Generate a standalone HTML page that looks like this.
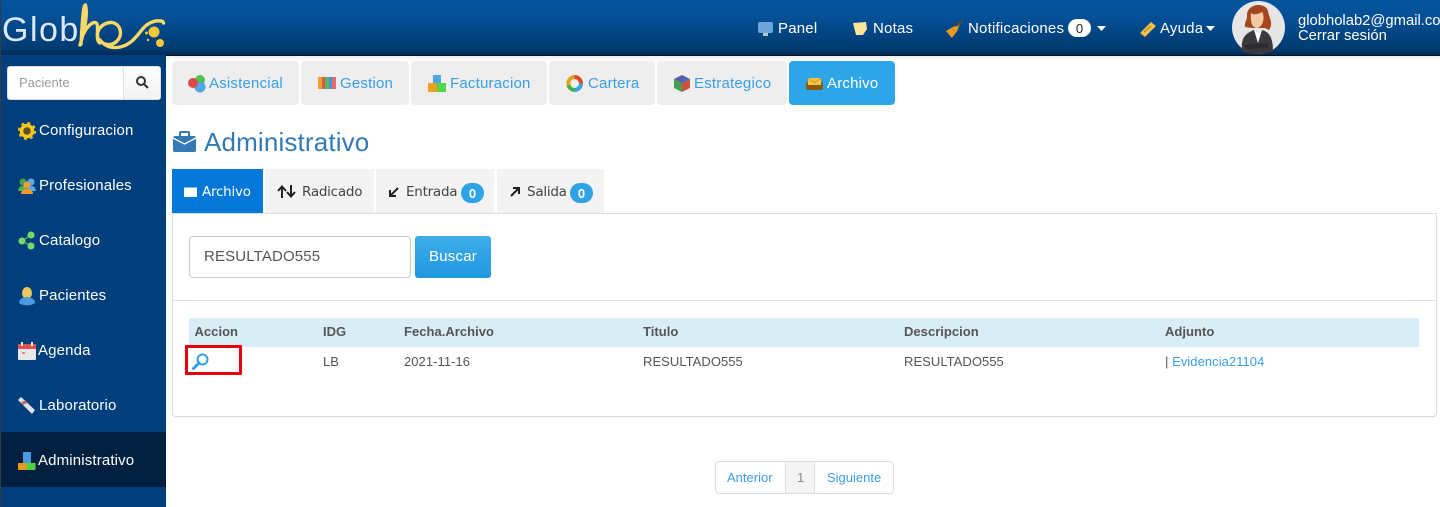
<!DOCTYPE html>
<html><head><meta charset="utf-8"><style>
html,body{margin:0;padding:0;width:1440px;height:507px;overflow:hidden;background:#fff}
body{font-family:"Liberation Sans",sans-serif;position:relative}
.a{position:absolute;white-space:nowrap}
svg{position:absolute;overflow:visible}
.nav{color:#fff;font-size:15px;line-height:18px;top:20px;letter-spacing:.2px}
.side{color:#fff;font-size:15px;line-height:18px;left:39px;letter-spacing:.15px}
.tab{position:absolute;top:61px;height:44px;background:#eee;border-radius:4px}
.tt{color:#3a9ee8;font-size:15px;line-height:18px;top:75px;letter-spacing:.2px}
.sub{position:absolute;top:169px;height:44px;background:#f3f3f3}
.st{font-family:"DejaVu Sans",sans-serif;font-size:13.5px;line-height:18px;top:183px;color:#444;letter-spacing:-.25px}
.badge{position:absolute;top:183px;width:23px;height:20px;border-radius:11px;background:#2ea3e8;color:#fff;font-size:13px;font-weight:bold;line-height:21px;text-align:center}
.th{font-size:13px;font-weight:bold;color:#555;top:323px;line-height:17px;letter-spacing:.03px}
.td{font-size:13px;color:#555;top:353px;line-height:17px;letter-spacing:.05px}
</style></head><body>
<div class="a" style="left:0;top:0;width:1440px;height:55px;background:linear-gradient(#04549e,#045097 30%,#003a70 90%,#002a55);border-bottom:1px solid #012"></div>
<div class="a" style="left:0;top:56px;width:1440px;height:5px;background:linear-gradient(#eee,#fff)"></div>
<div class="a" style="left:0;top:55px;width:166px;height:452px;background:#003f7c"></div>
<div class="a" style="left:0;top:0;width:1px;height:507px;background:#333c44"></div>
<div class="a" style="left:1px;top:432px;width:165px;height:55px;background:#01203f"></div>

<div class="a" style="left:2px;top:10px;font-size:34px;line-height:40px;color:#dbe8f5;letter-spacing:1.5px;font-weight:normal">Glob</div>
<svg style="left:0;top:0" width="170" height="56" viewBox="0 0 170 56" fill="none">
<path d="M80 45C84 32 88 15 85.500 5C83 4 82 28 81 44M82 37C86 27 94 19 97 24C99 30 95 40 100 43" stroke="#f8d866" stroke-width="3.400" stroke-linecap="round"/>
<path d="M100 42C93 32 102 22 112 22.500C121 24 123 35 117 41C112 46 104 46 100 40M104 44C112 50 124 48 132 41C140 34 143 26 150 23C156 20 163 20 163.500 23" stroke="#f8d866" stroke-width="3.400" stroke-linecap="round"/>
<circle cx="154" cy="32" r="5.500" fill="#f4c83c"/><circle cx="160" cy="43" r="4" fill="#f4c83c"/><circle cx="146.500" cy="33" r="1.500" fill="#f4c83c"/><circle cx="148" cy="40" r="1.200" fill="#f4c83c"/>
</svg>

<!-- top nav -->
<svg style="left:758px;top:22px" width="16" height="15"><rect x="0" y="0" width="15" height="11" rx="2" fill="#6aa6dc"/><rect x="5" y="11" width="5" height="3" fill="#b8c4d0"/></svg>
<div class="a nav" style="left:778px">Panel</div>
<svg style="left:852px;top:21px" width="16" height="16"><path d="M1 2L14 1L15 8L11 14L4 14Z" fill="#fbe59a"/></svg>
<div class="a nav" style="left:873px">Notas</div>
<svg style="left:945px;top:21px" width="18" height="18"><path d="M16 0L12 5C8 5 5 8 1 10L7 17C9 13 12 12 13 8Z" fill="#e89a20"/><path d="M16 0L12 5" stroke="#7a4a10" stroke-width="2"/></svg>
<div class="a nav" style="left:968px">Notificaciones</div>
<div class="a" style="left:1068px;top:19px;width:23px;height:18px;border-radius:10px;background:#fff;color:#222;font-size:13px;line-height:19px;text-align:center">0</div>
<svg style="left:1097px;top:26px" width="9" height="5"><path d="M0 0H9L4.500 5Z" fill="#fff"/></svg>
<svg style="left:1139px;top:21px" width="18" height="18"><path d="M1 12L12 1L17 5L6 16Z" fill="#eec24a"/><path d="M5 11L12 5" stroke="#a87c18"/></svg>
<div class="a nav" style="left:1160px">Ayuda</div>
<svg style="left:1206px;top:26px" width="9" height="5"><path d="M0 0H9L4.500 5Z" fill="#fff"/></svg>
<svg style="left:1232px;top:1px" width="53" height="53" viewBox="0 0 53 53">
<circle cx="26.500" cy="26.500" r="26.500" fill="#e6e6e6"/>
<path d="M15 15C14 3 33 0 36 10C37 17 42 22 37 29L33 27H20L13 26C12 22 15 20 15 15Z" fill="#a6461e"/>
<path d="M19 12C23 15 28 12 30 11C33 14 32 26 25 27C20 27 18 20 19 12Z" fill="#f4c9a4"/>
<path d="M10 50C9 38 12 33 22 29L26 35L30 29C38 31 41 38 41 50C33 54 18 54 10 50Z" fill="#3a3a3e"/>
<path d="M22 29L26 42L30 29L26 32Z" fill="#fff"/>
<path d="M12 44L36 42L36 47L14 48Z" fill="#2c2c30"/>
</svg>
<div class="a" style="left:1298px;top:14px;color:#fff;font-size:14.800px;line-height:14.500px">globholab2@gmail.com<br>Cerrar sesión</div>

<!-- search -->
<div class="a" style="left:7px;top:66px;height:32px;background:#fff;border-radius:3px;border:1px solid #ddd;box-sizing:content-box;width:152px"></div>
<div class="a" style="left:123px;top:67px;width:1px;height:32px;background:#ddd"></div>
<div class="a" style="left:124px;top:67px;width:36px;height:32px;background:linear-gradient(#fff,#f2f2f2);border-radius:0 3px 3px 0"></div>
<div class="a" style="left:19px;top:74px;color:#999;font-size:13px;line-height:17px">Paciente</div>
<svg style="left:136px;top:76px" width="13" height="13" fill="none" stroke="#333" stroke-width="2"><circle cx="5" cy="5" r="4"/><path d="M8 8L12 12"/></svg>

<!-- sidebar -->
<svg style="left:18px;top:122px" width="18" height="18" viewBox="0 0 18 18"><circle cx="9" cy="9" r="5.500" fill="#5a5020" stroke="#f4c820" stroke-width="3.500"/><circle cx="9" cy="9" r="8" fill="none" stroke="#ecbc18" stroke-width="2.200" stroke-dasharray="3 3.300"/></svg>
<div class="a side" style="top:122px">Configuracion</div>
<svg style="left:18px;top:178px" width="18" height="16"><circle cx="5" cy="4" r="3.500" fill="#4aa050"/><circle cx="13" cy="4" r="3.500" fill="#5aa8e8"/><path d="M0 13C1 6 8 6 9 13Z" fill="#4ab050"/><path d="M9 13C10 6 17 6 18 13Z" fill="#5aa8e8"/><circle cx="9" cy="7" r="3.500" fill="#eda040"/><path d="M3 16C3 9 15 9 15 16Z" fill="#ed9a30"/></svg>
<div class="a side" style="top:177px">Profesionales</div>
<svg style="left:19px;top:232px" width="16" height="18"><circle cx="3" cy="9" r="3.500" fill="#78dc66"/><circle cx="12" cy="3" r="3.500" fill="#78dc66"/><circle cx="12" cy="14" r="3.500" fill="#78dc66"/><path d="M3 9L12 3M3 9L12 14" stroke="#6ed060"/></svg>
<div class="a side" style="top:232px">Catalogo</div>
<svg style="left:19px;top:287px" width="16" height="18"><ellipse cx="8" cy="6" rx="5" ry="6" fill="#eac860"/><path d="M0 16C0 8 16 8 16 16C12 19 4 19 0 16Z" fill="#4a9ae0"/></svg>
<div class="a side" style="top:287px">Pacientes</div>
<svg style="left:18px;top:342px" width="18" height="18"><rect x="0" y="2" width="18" height="16" rx="1" fill="#e8e8e8"/><path d="M0 3Q0 2 1 2H17Q18 2 18 3V7H0Z" fill="#e05050"/><rect x="3" y="0" width="2" height="4" fill="#eee"/><rect x="13" y="0" width="2" height="4" fill="#eee"/><rect x="4" y="10" width="3" height="2" fill="#d88"/></svg>
<div class="a side" style="top:342px;left:38px">Agenda</div>
<svg style="left:18px;top:397px" width="18" height="17"><path d="M0 3L3 0L17 13L14 17Z" fill="#dfe4ea"/><path d="M3 5L8 3.500L9 6L5 8Z" fill="#d06050"/></svg>
<div class="a side" style="top:397px">Laboratorio</div>
<svg style="left:18px;top:452px" width="18" height="18"><rect x="5" y="0" width="8" height="11" fill="#4a9ae0"/><rect x="0" y="11" width="8.500" height="7" fill="#e89a20"/><rect x="8.500" y="11" width="9" height="7" fill="#50d040"/></svg>
<div class="a side" style="top:452px;left:38px">Administrativo</div>

<!-- top tabs -->
<div class="tab" style="left:172px;width:127px"></div>
<div class="tab" style="left:301px;width:108px"></div>
<div class="tab" style="left:411px;width:136px"></div>
<div class="tab" style="left:549px;width:106px"></div>
<div class="tab" style="left:657px;width:130px"></div>
<div class="tab" style="left:789px;width:106px;background:#2ea5e9"></div>
<svg style="left:188px;top:75px" width="18" height="18"><circle cx="12" cy="5" r="5" fill="#50c050"/><circle cx="12" cy="12" r="5.500" fill="#50a8e8"/><circle cx="5" cy="8" r="5" fill="#e04848"/></svg>
<div class="a tt" style="left:209px">Asistencial</div>
<svg style="left:318px;top:77px" width="18" height="14"><rect x="0" y="0" width="4" height="12" fill="#f0a030"/><rect x="4" y="0" width="3" height="12" fill="#e05a40"/><rect x="7" y="0" width="4" height="12" fill="#58b868"/><rect x="11" y="0" width="3" height="12" fill="#4a90d8"/><rect x="14" y="0" width="4" height="12" fill="#e06a70"/></svg>
<div class="a tt" style="left:340px">Gestion</div>
<svg style="left:428px;top:75px" width="18" height="18"><rect x="5" y="0" width="8" height="9" fill="#4aa8e8"/><rect x="0" y="8" width="9" height="9" fill="#f0a020"/><rect x="9" y="8" width="9" height="9" fill="#50d848"/></svg>
<div class="a tt" style="left:450px">Facturacion</div>
<svg style="left:566px;top:75px" width="17" height="17" fill="none" stroke-width="4"><path d="M2.500 10A6.500 6.500 0 0 1 8.500 2" stroke="#e8a020"/><path d="M8.500 2A6.500 6.500 0 0 1 15 8.500" stroke="#e04828"/><path d="M15 8.500A6.500 6.500 0 0 1 8.500 15" stroke="#3aa0e0"/><path d="M8.500 15A6.500 6.500 0 0 1 2.500 10" stroke="#48b048"/></svg>
<div class="a tt" style="left:588px">Cartera</div>
<svg style="left:674px;top:75px" width="16" height="17"><path d="M8 0L16 4L8 8L0 4Z" fill="#5a5aa8"/><path d="M0 4L8 8V17L0 13Z" fill="#40a050"/><path d="M16 4L8 8V17L16 13Z" fill="#d05040"/><path d="M16 4L8 8L8 3Z" fill="#4070c0"/></svg>
<div class="a tt" style="left:694px">Estrategico</div>
<svg style="left:806px;top:77px" width="17" height="13"><rect x="0" y="5" width="17" height="8" rx="2" fill="#8a5a10"/><path d="M2 1H15V8H2Z" fill="#f4c648"/><path d="M2 1L8.500 6L15 1" stroke="#d09a20" fill="none"/></svg>
<div class="a tt" style="left:827px;color:#fff">Archivo</div>

<!-- title -->
<svg style="left:173px;top:131px" width="23" height="21"><rect x="7" y="1" width="9" height="5" rx="1" fill="none" stroke="#337ab7" stroke-width="2"/><rect x="0" y="5" width="23" height="16" rx="2" fill="#337ab7"/><path d="M0 7L11.500 13L23 7" stroke="#fff" stroke-width="1.300" fill="none"/></svg>
<div class="a" style="left:204px;top:126px;color:#337ab7;font-size:26px;line-height:32px;letter-spacing:.15px">Administrativo</div>

<!-- sub tabs -->
<div class="sub" style="left:172px;width:91px;background:#0378d8"></div>
<div class="sub" style="left:265px;width:109px"></div>
<div class="sub" style="left:376px;width:118px"></div>
<div class="sub" style="left:497px;width:107px"></div>
<svg style="left:184px;top:187px" width="13" height="10"><path d="M0 0.500H13V10H0Z" fill="#fff"/></svg>
<div class="a st" style="left:202px;color:#fff">Archivo</div>
<svg style="left:277px;top:185px" width="19" height="13" fill="none" stroke="#222" stroke-width="2"><path d="M5 13V2M1 6L5 1.500L9 6M14 0V11M10 7L14 11.500L18 7"/></svg>
<div class="a st" style="left:302px">Radicado</div>
<svg style="left:389px;top:187px" width="10" height="10" fill="none" stroke="#222" stroke-width="2"><path d="M9 1L2 8M1 3V9H7"/></svg>
<div class="a st" style="left:406px">Entrada</div>
<div class="badge" style="left:461px">0</div>
<svg style="left:510px;top:187px" width="10" height="10" fill="none" stroke="#222" stroke-width="2"><path d="M1 9L8 2M3 1H9V7"/></svg>
<div class="a st" style="left:527px">Salida</div>
<div class="badge" style="left:570px">0</div>

<!-- panel -->
<div class="a" style="left:172px;top:213px;width:1265px;height:204px;box-sizing:border-box;background:#fff;border:1px solid #ddd;border-radius:0 0 4px 4px;box-shadow:0 1px 1px rgba(0,0,0,.05)"></div>
<div class="a" style="left:189px;top:236px;width:222px;height:42px;box-sizing:border-box;border:1px solid #ccc;border-radius:4px;background:#fff;color:#555;font-size:15px;line-height:40px;padding-left:14px;letter-spacing:.15px">RESULTADO555</div>
<div class="a" style="left:415px;top:236px;width:76px;height:42px;border-radius:3px;background:linear-gradient(#3fade9,#2097e2);color:#fff;font-size:15px;line-height:42px;text-align:center;letter-spacing:.2px">Buscar</div>
<div class="a" style="left:173px;top:300px;width:1263px;height:1px;background:#e2e2e2"></div>
<div class="a" style="left:189px;top:318px;width:1230px;height:29px;background:#d9edf7"></div>
<div class="a th" style="left:194.500px">Accion</div>
<div class="a th" style="left:323px">IDG</div>
<div class="a th" style="left:404px">Fecha.Archivo</div>
<div class="a th" style="left:643px">Titulo</div>
<div class="a th" style="left:904px">Descripcion</div>
<div class="a th" style="left:1165px">Adjunto</div>
<div class="a" style="left:185px;top:345px;width:57px;height:30px;box-sizing:border-box;border:3px solid #e8000c;border-radius:1px"></div>
<svg style="left:191px;top:353px" width="18" height="18" fill="none" stroke="#2f9fe8"><circle cx="11.500" cy="6.500" r="5" stroke-width="2"/><path d="M8 10L2.500 15.500" stroke-width="3" stroke-linecap="round"/></svg>
<div class="a td" style="left:323px">LB</div>
<div class="a td" style="left:404px">2021-11-16</div>
<div class="a td" style="left:643px">RESULTADO555</div>
<div class="a td" style="left:904px">RESULTADO555</div>
<div class="a td" style="left:1165px">| <span style="color:#3a9ee8">Evidencia21104</span></div>

<!-- pagination -->
<div class="a" style="left:715px;top:461px;width:179px;height:33px;box-sizing:border-box;border:1px solid #ddd;border-radius:4px;background:#fff"></div>
<div class="a" style="left:785px;top:462px;width:30px;height:31px;box-sizing:border-box;background:#f4f4f4;border-left:1px solid #ddd;border-right:1px solid #ddd"></div>
<div class="a" style="left:727px;top:469px;color:#3a9ee8;font-size:13px;line-height:17px">Anterior</div>
<div class="a" style="left:797px;top:469px;color:#888;font-size:13px;line-height:17px">1</div>
<div class="a" style="left:827px;top:469px;color:#3a9ee8;font-size:13px;line-height:17px">Siguiente</div>
</body></html>
